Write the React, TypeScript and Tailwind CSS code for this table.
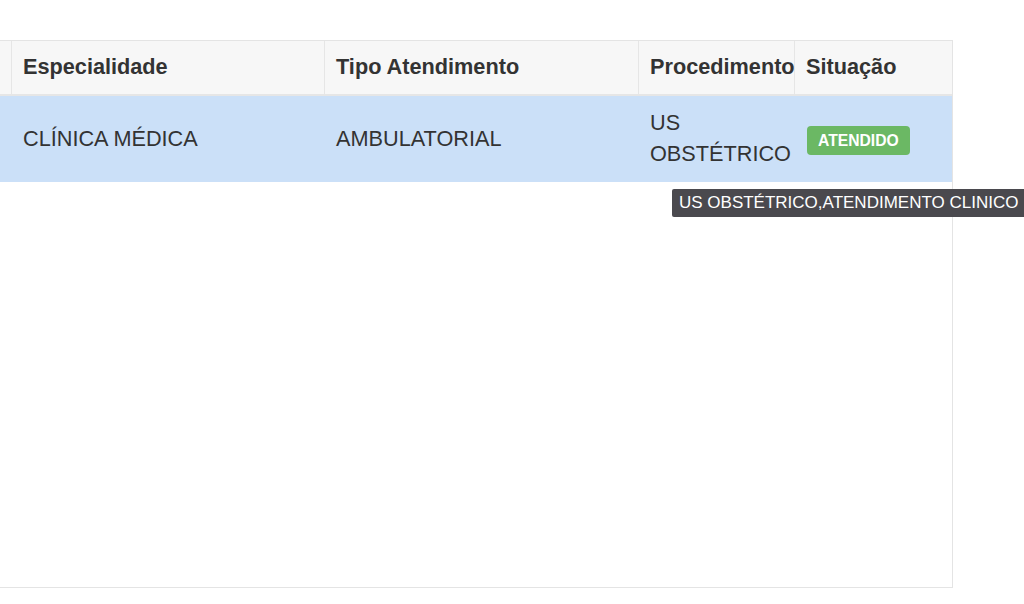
import React from 'react';

const headers = ['', 'Especialidade', 'Tipo Atendimento', 'Procedimento', 'Situação'];

const App: React.FC = () => {
    return (
        <div className="relative h-[604px] w-full overflow-hidden bg-white font-['Liberation_Sans',Arial,sans-serif] text-[#333]">
            <div className="pt-[40px]">
                <div className="h-[548px] w-[953px] border border-l-0 border-[#e4e4e4]">
                    {/* header */}
                    <div className="grid grid-cols-[12px_313px_314px_156px_157px] border-b-2 border-[#e6e6e6] bg-[#f7f7f7]">
                        {headers.map((h, i) => (
                            <div
                                key={i}
                                className={`flex h-[53px] items-center whitespace-nowrap text-[21.7px] font-bold ${i > 0 ? 'px-[11px]' : ''} ${i < 4 ? 'border-r border-[#e6e6e6]' : ''}`}
                            >
                                {h}
                            </div>
                        ))}
                    </div>

                    {/* row */}
                    <div className="grid h-[86px] grid-cols-[12px_313px_314px_156px_157px] bg-[#cbe0f8] text-[21.7px] leading-[31px]">
                        <div />
                        <div className="flex items-center px-[11px] pb-[2px]">CLÍNICA MÉDICA</div>
                        <div className="flex items-center px-[11px] pb-[2px]">AMBULATORIAL</div>
                        <div className="flex items-center px-[11px] pb-[2px]">
                            <span>US OBSTÉTRICO</span>
                        </div>
                        <div className="flex items-center px-[12px] pt-[2px]">
                            <span className="rounded-[4px] bg-[#6bb864] px-[11px] py-[5px] text-[15.7px] font-bold leading-[19px] text-white">
                                ATENDIDO
                            </span>
                        </div>
                    </div>
                </div>
            </div>

            {/* tooltip */}
            <div className="absolute left-[672px] top-[189px] flex h-[28px] items-center whitespace-nowrap rounded-[2px] bg-[#4a494e] pl-[7px] pr-[10px] text-[17px] text-white">
                US OBSTÉTRICO,ATENDIMENTO CLINICO
            </div>
        </div>
    );
};

export default App;
